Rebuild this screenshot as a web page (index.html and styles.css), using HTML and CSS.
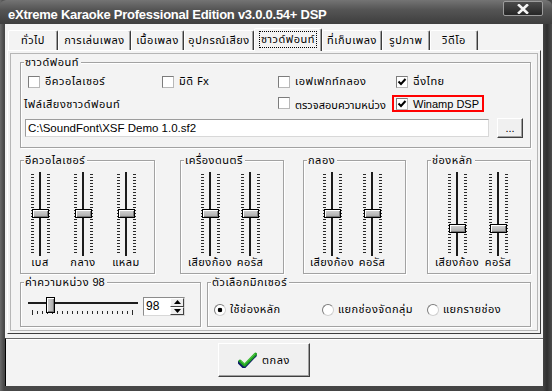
FILE: index.html
```html
<!DOCTYPE html>
<html lang="th">
<head>
<meta charset="utf-8">
<title>eXtreme Karaoke</title>
<link rel="stylesheet" href="styles.css">
</head>
<body>
<div class="window">
  <div class="titlebar">
    <span class="title">eXtreme Karaoke Professional Edition v3.0.0.54+ DSP</span>
    <div class="close"><svg width="12" height="10" viewBox="0 0 12 10"><path d="M2 1.2 L10 8.8 M10 1.2 L2 8.8" stroke="#f4f4f4" stroke-width="2.6" stroke-linecap="square"/></svg></div>
  </div>
  <div class="client">
    <div class="tabarea">
      <div class="tabs">
        <div class="tab t1">ทั่วไป</div>
        <div class="tab t2">การเล่นเพลง</div>
        <div class="tab t3">เนื้อเพลง</div>
        <div class="tab t4">อุปกรณ์เสียง</div>
        <div class="tab t5 sel"><span class="focus">ซาวด์ฟอนท์</span></div>
        <div class="tab t6">ที่เก็บเพลง</div>
        <div class="tab t7">รูปภาพ</div>
        <div class="tab t8">วิดีโอ</div>
      </div>
      <div class="panel">
        <div class="group sf">
          <span class="cap">ซาวด์ฟอนท์</span>
          <div class="sf-grid">
            <div class="chk"><span class="box"></span>อีควอไลเซอร์</div>
            <div class="chk"><span class="box"></span>มิดิ Fx</div>
            <div class="chk"><span class="box"></span>เอฟเฟกท์กลอง</div>
            <div class="chk col4"><span class="box"><svg width="10" height="10" viewBox="0 0 10 10"><path d="M1.5 4.5 L4 7 L8.5 2" fill="none" stroke="#000" stroke-width="2"/></svg></span>ฉิ่งไทย</div>
            <div class="file-label">ไฟล์เสียงซาวด์ฟอนท์</div>
            <div class="chk up"><span class="box"></span>ตรวจสอบความหน่วง</div>
            <div class="chk red"><span class="box"><svg width="10" height="10" viewBox="0 0 10 10"><path d="M1.5 4.5 L4 7 L8.5 2" fill="none" stroke="#000" stroke-width="2"/></svg></span><span class="latin">Winamp DSP</span></div>
          </div>
          <div class="file-row">
            <div class="input latin">C:\SoundFont\XSF Demo 1.0.sf2</div>
            <div class="btn dots latin">...</div>
          </div>
        </div>

        <div class="slider-row">
          <div class="group vgroup g-eq">
            <span class="cap">อีควอไลเซอร์</span>
            <div class="vs"><div class="vtrack"><div class="thumb"></div></div><span class="vlbl">เบส</span></div>
            <div class="vs"><div class="vtrack"><div class="thumb"></div></div><span class="vlbl">กลาง</span></div>
            <div class="vs"><div class="vtrack"><div class="thumb"></div></div><span class="vlbl">แหลม</span></div>
          </div>
          <div class="group vgroup g-ins">
            <span class="cap">เครื่องดนตรี</span>
            <div class="vs"><div class="vtrack"><div class="thumb"></div></div><span class="vlbl">เสียงก้อง</span></div>
            <div class="vs"><div class="vtrack"><div class="thumb"></div></div><span class="vlbl">คอรัส</span></div>
          </div>
          <div class="group vgroup g-drm">
            <span class="cap">กลอง</span>
            <div class="vs"><div class="vtrack"><div class="thumb"></div></div><span class="vlbl">เสียงก้อง</span></div>
            <div class="vs"><div class="vtrack"><div class="thumb"></div></div><span class="vlbl">คอรัส</span></div>
          </div>
          <div class="group vgroup g-main">
            <span class="cap">ช่องหลัก</span>
            <div class="vs"><div class="vtrack"><div class="thumb low"></div></div><span class="vlbl">เสียงก้อง</span></div>
            <div class="vs"><div class="vtrack"><div class="thumb low"></div></div><span class="vlbl">คอรัส</span></div>
          </div>
        </div>

        <div class="low-row">
          <div class="group delay">
            <span class="cap">ค่าความหน่วง <span class="latin">98</span></span>
            <div class="hslider"><div class="hthumb"></div></div>
            <div class="spin">
              <span class="spin-val latin">98</span>
              <span class="spin-btns">
                <span class="sb"><svg width="7" height="4" viewBox="0 0 7 4"><path d="M0 4 L3.5 0 L7 4 Z" fill="#000"/></svg></span>
                <span class="sb"><svg width="7" height="4" viewBox="0 0 7 4"><path d="M0 0 L3.5 4 L7 0 Z" fill="#000"/></svg></span>
              </span>
            </div>
          </div>
          <div class="group mixer">
            <span class="cap">ตัวเลือกมิกเซอร์</span>
            <div class="radios">
              <div class="rad"><span class="radio on"></span>ใช้ช่องหลัก</div>
              <div class="rad"><span class="radio"></span>แยกช่องจัดกลุ่ม</div>
              <div class="rad"><span class="radio"></span>แยกรายช่อง</div>
            </div>
          </div>
        </div>
      </div>
    </div>
    <div class="footer">
      <div class="btn ok">
        <svg width="19" height="16" viewBox="0 0 19 16">
          <path d="M2 9.5 L6.5 14 L17.5 2.5" fill="none" stroke="#0c1a66" stroke-width="3.6" stroke-linejoin="round" stroke-linecap="round" transform="translate(-0.6 0.9)"/>
          <path d="M2 9 L6.5 13.2 L17.5 2" fill="none" stroke="#22a322" stroke-width="3" stroke-linejoin="round" stroke-linecap="round"/>
          <path d="M3 8.6 L6.5 11.8 L16.8 1.8" fill="none" stroke="#6fdc5c" stroke-width="1" stroke-linecap="round"/>
        </svg>
        <span>ตกลง</span>
      </div>
    </div>
  </div>
</div>
</body>
</html>
```

FILE: styles.css
```css
body {
  margin: 0;
  font-family: Tahoma, "Noto Sans Thai", "Noto Sans", "Liberation Sans", sans-serif;
  font-size: 11px;
  letter-spacing: 0.5px;
  color: #000;
}

.latin {
  font-family: "Liberation Sans", Arial, sans-serif;
  letter-spacing: 0;
}

.window {
  width: 552px;
  height: 391px;
  display: flex;
  flex-direction: column;
  background: linear-gradient(to right, #6a6a6a 0, #474747 4px, #434343 543px, #2f2f2f 547px, #4c4c4c 552px);
  overflow: hidden;
}

.titlebar {
  height: 24px;
  flex: none;
  display: flex;
  align-items: flex-start;
  background: linear-gradient(#747474, #555 40%, #3e3e3e);
  border-radius: 6px 6px 0 0;
}

.title {
  color: #fff;
  font: bold 13px "Liberation Sans", Arial, sans-serif;
  letter-spacing: -0.25px;
  line-height: 15px;
  margin: 7px 0 0 8px;
  white-space: nowrap;
}

.close {
  box-sizing: border-box;
  width: 40px;
  height: 15px;
  margin: 1px 9px 0 auto;
  border: 1px solid #9c9c9c;
  border-radius: 2px;
  background: linear-gradient(#4a4a4a, #262626);
  display: flex;
  align-items: center;
  justify-content: center;
}

.client {
  flex: 1;
  margin: 0 9px 5px 5px;
  background: #f3f3f3;
  display: flex;
  flex-direction: column;
}

.tabarea {
  padding: 6px 2px 0;
}

.tabs {
  display: flex;
  height: 20px;
  padding-left: 1px;
  position: relative;
  z-index: 1;
}

.tab {
  box-sizing: border-box;
  height: 20px;
  border: 1px solid;
  border-bottom: none;
  border-color: #fff #3c3c3c transparent #fff;
  box-shadow: inset -1px 0 #a0a0a0;
  border-radius: 2px 2px 0 0;
  display: flex;
  align-items: center;
  justify-content: center;
  white-space: nowrap;
  background: #f3f3f3;
}

.t1 { width: 50px; }
.t2 { width: 73px; }
.t3 { width: 53px; }
.t4 { width: 70px; }
.t5 { width: 68px; }
.t6 { width: 60px; }
.t7 { width: 48px; }
.t8 { width: 48px; }

.tab.sel {
  height: 23px;
  margin-top: -2px;
  padding-bottom: 2px;
}

.focus {
  outline: 1px dotted #000;
  padding: 1px 1px;
  line-height: 13px;
}

.panel {
  box-sizing: border-box;
  height: 284px;
  border: 1px solid;
  border-color: #fff #3c3c3c #3c3c3c #fff;
  box-shadow: inset 0 0 0 2px #f3f3f3, inset 0 0 0 3px #b6b6b6;
  padding: 11px 9px 0 12px;
}

.group {
  position: relative;
  box-sizing: border-box;
  border: 1px solid #a2a2a2;
  box-shadow: 1px 1px 0 #fff, inset 1px 1px 0 #fff;
}

.cap {
  position: absolute;
  top: -7px;
  left: 3px;
  padding: 0 2px 0 1px;
  line-height: 13px;
  background: #f3f3f3;
  white-space: nowrap;
}

/* Sound font group */
.sf {
  height: 86px;
  padding: 12px 7px 0 3px;
}

.sf-grid {
  display: grid;
  grid-template-columns: 134px 116px 114px auto;
  grid-template-rows: 13px 17px;
  row-gap: 7px;
  margin-left: 4px;
}

.chk {
  display: flex;
  align-items: center;
  white-space: nowrap;
}

.box {
  box-sizing: border-box;
  width: 12px;
  height: 12px;
  flex: none;
  margin-right: 5px;
  border: 1px solid;
  border-color: #7c7c7c #b8b8b8 #b8b8b8 #7c7c7c;
  background: #fff;
  display: flex;
  align-items: center;
  justify-content: center;
}

.col4 {
  padding-left: 4px;
}

.file-label {
  grid-column: 1 / 3;
  margin-left: -4px;
  align-self: center;
  padding-top: 2px;
  white-space: nowrap;
}

.up {
  align-items: flex-start;
  padding-top: 2px;
  letter-spacing: 0;
}

.red {
  box-sizing: border-box;
  width: 92px;
  height: 17px;
  border: 2px solid #ff0000;
  padding-left: 2px;
  padding-top: 1px;
}

.file-row {
  display: flex;
  gap: 8px;
  margin-top: 6px;
  align-items: flex-start;
}

.input {
  flex: 1;
  box-sizing: border-box;
  height: 18px;
  margin: 1px 0 0 1px;
  padding-left: 2px;
  border: 1px solid;
  border-color: #9c9c9c #d8d8d8 #d8d8d8 #9c9c9c;
  background: #fff;
  line-height: 16px;
  font-size: 11.5px;
  white-space: nowrap;
}

.btn {
  box-sizing: border-box;
  border: 1px solid;
  border-color: #fff #404040 #404040 #fff;
  box-shadow: inset -1px -1px 0 #a0a0a0;
  background: #f0f0f0;
}

.dots {
  width: 26px;
  height: 20px;
  display: flex;
  align-items: flex-end;
  justify-content: center;
  line-height: 14px;
  padding-bottom: 2px;
}

/* Vertical sliders */
.slider-row {
  display: flex;
  height: 114px;
  margin-top: 12px;
}

.vgroup {
  display: flex;
  padding-top: 11px;
}

.g-eq { width: 135px; column-gap: 5px; }
.g-ins { width: 104px; margin-left: 25px; padding-left: 10px; column-gap: 2px; }
.g-drm { width: 103px; margin-left: 19px; padding-left: 9px; column-gap: 2px; }
.g-main { width: 104px; margin-left: 21px; padding-left: 10px; column-gap: 3px; }

.vs {
  width: 38px;
  display: flex;
  flex-direction: column;
  align-items: center;
}

.vtrack {
  position: relative;
  width: 38px;
  height: 84px;
  flex: none;
  background-image:
    linear-gradient(#1c1c1c, #1c1c1c),
    repeating-linear-gradient(to bottom, #2a2a2a 0 1px, transparent 1px 3px),
    repeating-linear-gradient(to bottom, #2a2a2a 0 1px, transparent 1px 3px);
  background-size: 2px 84px, 3px 79px, 3px 79px;
  background-position: 18px 0, 10px 2px, 26px 2px;
  background-repeat: no-repeat;
}

.thumb {
  position: absolute;
  left: 11px;
  top: 37px;
  box-sizing: border-box;
  width: 17px;
  height: 9px;
  border: 1px solid #000;
  background: linear-gradient(#d4d4d4, #a9a9a9);
  box-shadow: inset 1px 1px 0 #fff, inset -1px -1px 0 #7a7a7a;
}

.thumb.low {
  top: 52px;
}

.vlbl {
  line-height: 14px;
  white-space: nowrap;
}

/* Lower row */
.low-row {
  display: flex;
  gap: 6px;
  height: 45px;
  margin-top: 8px;
}

.delay {
  width: 181px;
  display: flex;
  align-items: flex-start;
  padding: 13px 0 0 7px;
}

.hslider {
  position: relative;
  width: 110px;
  height: 20px;
  flex: none;
  background-image:
    linear-gradient(#1c1c1c, #1c1c1c),
    repeating-linear-gradient(to right, #2a2a2a 0 1px, transparent 1px 5px),
    linear-gradient(#2a2a2a, #2a2a2a),
    linear-gradient(#2a2a2a, #2a2a2a);
  background-size: 110px 2px, 101px 3px, 1px 5px, 1px 5px;
  background-position: 0 6px, 4px 15px, 4px 14px, 104px 14px;
  background-repeat: no-repeat;
}

.hthumb {
  position: absolute;
  left: 18px;
  top: 1px;
  box-sizing: border-box;
  width: 9px;
  height: 16px;
  border: 1px solid #000;
  background: linear-gradient(to right, #d4d4d4, #a9a9a9);
  box-shadow: inset 1px 1px 0 #fff, inset -1px -1px 0 #7a7a7a;
}

.spin {
  box-sizing: border-box;
  display: flex;
  width: 42px;
  height: 19px;
  margin: 1px 0 0 5px;
  border: 1px solid;
  border-color: #8c8c8c #d8d8d8 #d8d8d8 #8c8c8c;
  background: #fff;
}

.spin-val {
  flex: 1;
  padding-left: 2px;
  line-height: 16px;
  font-size: 12px;
}

.spin-btns {
  display: flex;
  flex-direction: column;
  width: 14px;
}

.sb {
  flex: 1;
  box-sizing: border-box;
  border: 1px solid;
  border-color: #fff #404040 #404040 #fff;
  background: #eee;
  display: flex;
  align-items: center;
  justify-content: center;
}

.mixer {
  flex: 1;
  padding: 18px 0 0 6px;
}

.radios {
  display: grid;
  grid-template-columns: 108px 105px auto;
  height: 13px;
}

.rad {
  display: flex;
  align-items: center;
  white-space: nowrap;
}

.radio {
  box-sizing: border-box;
  width: 12px;
  height: 12px;
  flex: none;
  margin-right: 4px;
  border-radius: 50%;
  border: 1px solid;
  border-color: #7c7c7c #d0d0d0 #d0d0d0 #7c7c7c;
  background: #fff;
}

.radio.on {
  background: radial-gradient(circle, #000 0 2px, #fff 2.6px);
}

/* Footer */
.footer {
  flex: 1;
  margin-top: 4px;
  border-top: 1px solid #6a6a6a;
  border-left: 1px solid #000;
  box-shadow: inset 0 1px 0 #fff;
  padding: 4px 0 0 212px;
}

.ok {
  width: 92px;
  height: 34px;
  display: flex;
  align-items: center;
  justify-content: center;
  gap: 5px;
}
```
